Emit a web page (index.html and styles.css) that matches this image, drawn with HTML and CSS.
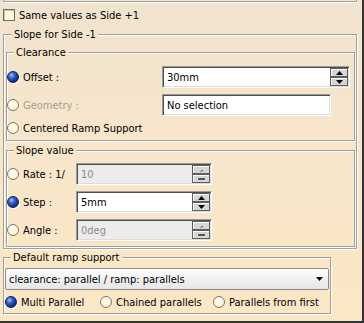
FILE: index.html
```html
<!DOCTYPE html>
<html>
<head>
<meta charset="utf-8">
<link rel="stylesheet" href="styles.css">
</head>
<body>
<div class="win">
  <div class="topbox"></div>
  <div class="check-row"><span class="cb"></span><span>Same values as Side +1</span></div>

  <fieldset class="grp outer">
    <legend class="lg-outer">Slope for Side -1</legend>

    <fieldset class="grp clearance">
      <legend class="lg-inner lg-top">Clearance</legend>
      <div class="row">
        <span class="lbl lbl-wide"><span class="radio on"></span><span>Offset :</span></span>
        <div class="field w-offset"><span class="val">30mm</span>
          <span class="spin"><span class="sb"><svg width="7" height="4" viewBox="0 0 7 4"><path d="M0 4h7L3.5 0z"/></svg></span><span class="sb"><svg width="7" height="4" viewBox="0 0 7 4"><path d="M0 0h7L3.5 4z"/></svg></span></span>
        </div>
      </div>
      <div class="row">
        <span class="lbl lbl-wide"><span class="radio"></span><span class="dis">Geometry :</span></span>
        <div class="field w-geom"><span class="val">No selection</span></div>
      </div>
      <div class="row row-short">
        <span class="lbl"><span class="radio"></span><span>Centered Ramp Support</span></span>
      </div>
    </fieldset>

    <fieldset class="grp slope">
      <legend class="lg-inner lg-mid">Slope value</legend>
      <div class="row">
        <span class="lbl lbl-narrow"><span class="radio"></span><span>Rate : 1/</span></span>
        <div class="field w-small disabled"><span class="val">10</span>
          <span class="spin"><span class="sb"><svg width="7" height="4" viewBox="0 0 7 4"><path d="M3 3.5L4.5 2" stroke="#000" stroke-width="1"/></svg></span><span class="sb"><svg width="7" height="4" viewBox="0 0 7 4"><path d="M0 2h7" stroke="#000" stroke-width="1.2"/></svg></span></span>
        </div>
      </div>
      <div class="row">
        <span class="lbl lbl-narrow"><span class="radio on"></span><span>Step :</span></span>
        <div class="field w-small"><span class="val">5mm</span>
          <span class="spin"><span class="sb"><svg width="7" height="4" viewBox="0 0 7 4"><path d="M0 4h7L3.5 0z"/></svg></span><span class="sb"><svg width="7" height="4" viewBox="0 0 7 4"><path d="M0 0h7L3.5 4z"/></svg></span></span>
        </div>
      </div>
      <div class="row">
        <span class="lbl lbl-narrow"><span class="radio"></span><span>Angle :</span></span>
        <div class="field w-small disabled"><span class="val">0deg</span>
          <span class="spin"><span class="sb"><svg width="7" height="4" viewBox="0 0 7 4"><path d="M3 3.5L4.5 2" stroke="#000" stroke-width="1"/></svg></span><span class="sb"><svg width="7" height="4" viewBox="0 0 7 4"><path d="M0 2h7" stroke="#000" stroke-width="1.2"/></svg></span></span>
        </div>
      </div>
    </fieldset>
  </fieldset>

  <fieldset class="grp ramp">
    <legend class="lg-ramp">Default ramp support</legend>
    <div class="combo"><span>clearance: parallel / ramp: parallels</span>
      <svg class="arrow" width="7" height="4" viewBox="0 0 7 4"><path d="M0 0h7L3.5 4z"/></svg>
    </div>
    <div class="radios">
      <span class="opt opt1"><span class="radio on"></span><span>Multi Parallel</span></span>
      <span class="opt opt2"><span class="radio"></span><span>Chained parallels</span></span>
      <span class="opt"><span class="radio"></span><span>Parallels from first</span></span>
    </div>
  </fieldset>
</div>
</body>
</html>
```
FILE: styles.css
```css
* { box-sizing: border-box; }
html, body { margin: 0; padding: 0; }
body {
  font-family: "DejaVu Sans Condensed", "DejaVu Sans", sans-serif;
  font-size: 11px;
  color: #000;
}
.win {
  width: 364px;
  height: 323px;
  overflow: hidden;
  background: linear-gradient(#f1e3d0, #f7e6cb 45%, #fce7c5);
  border-right: 2px solid #333;
  border-bottom: 2px solid #333;
}
.topbox {
  height: 2px;
  margin: 0 5px 0 3px;
  border: 1px solid #a09e98;
  border-top: none;
  box-shadow: 1px 1px 0 #fff;
}
.check-row {
  display: flex;
  align-items: center;
  gap: 4px;
  height: 12px;
  margin-top: 7px;
  padding-left: 3px;
}
.cb {
  width: 12px;
  height: 12px;
  border: 1px solid #6f6c60;
  background: #fffbdc;
  box-shadow: inset 1px 1px 0 #c8c2a8;
}
.grp {
  margin: 0;
  min-width: 0;
  border: 1px solid #a09e98;
  box-shadow: inset 1px 1px 0 #fff, 1px 1px 0 #fff;
}
legend {
  padding: 0 2px;
  height: 13px;
  line-height: 13px;
}
.outer {
  margin: 7px 5px 0 3px;
  padding: 5px 1px 1px 2px;
}
.lg-outer { margin-left: 6px; background: #f3e4ce; }
.lg-inner { margin-left: 7px; }
.lg-top { background: #f4e4cd; }
.lg-mid { background: #f7e6ca; }
.clearance { padding: 7px 0 4px 0; }
.slope { margin-top: 3px; padding: 6px 0 5px 0; }
.row {
  display: flex;
  align-items: center;
  height: 22px;
}
.row + .row { margin-top: 6px; }
.row-short { height: 16px; }
.row + .row-short { margin-top: 4px; }
.lbl {
  display: flex;
  align-items: center;
  gap: 4px;
  flex: none;
}
.lbl-wide { width: 155px; }
.lbl-narrow { width: 69px; }
.dis { color: #a09c94; }
.radio {
  flex: none;
  width: 12px;
  height: 12px;
  border-radius: 50%;
  border: 1px solid #7c7866;
  background: radial-gradient(circle at 40% 40%, #fffef2, #f6efcf);
}
.radio.on {
  border: 1px solid #0d1f55;
  background: radial-gradient(circle at 35% 32%, #a8c4f4 0, #3b66c8 30%, #163a9a 60%, #0a1d5a 100%);
  box-shadow: 1px 1px 0 #fff;
}
.field {
  display: flex;
  align-items: center;
  height: 22px;
  background: #fff;
  border: 1px solid;
  border-color: #9a9a9a #fff #fff #9a9a9a;
  box-shadow: inset 1px 1px 0 #505050, inset -1px -1px 0 #dcdcdc;
  padding: 0 1px 0 4px;
}
.field.disabled { background: #ececec; }
.field.disabled .val { color: #8c8c8c; }
.w-offset { width: 188px; }
.w-geom { width: 169px; }
.w-small { width: 136px; }
.val { flex: 1; white-space: nowrap; }
.spin {
  display: flex;
  flex-direction: column;
  gap: 0;
}
.sb {
  width: 18px;
  height: 9px;
  display: flex;
  align-items: center;
  justify-content: center;
  border: 1px solid #5e5e5e;
  background: #d6d6d6;
  box-shadow: inset 1px 1px 0 #fff;
}
.ramp {
  width: 328px;
  margin: 2px 0 0 3px;
  padding: 4px 1px 1px 1px;
}
.lg-ramp { margin-left: 6px; background: #fae7c7; }
.combo {
  display: flex;
  align-items: center;
  justify-content: space-between;
  height: 22px;
  padding: 0 5px 0 3px;
  border: 1px solid #8a8a8a;
  border-radius: 2px;
  background: linear-gradient(#fdfdfd, #e6e6e6);
}
.radios {
  display: flex;
  align-items: center;
  height: 20px;
  margin-top: 2px;
}
.opt {
  display: flex;
  align-items: center;
  gap: 4px;
  flex: none;
}
.opt1 { width: 95px; }
.opt2 { width: 113px; }
```
